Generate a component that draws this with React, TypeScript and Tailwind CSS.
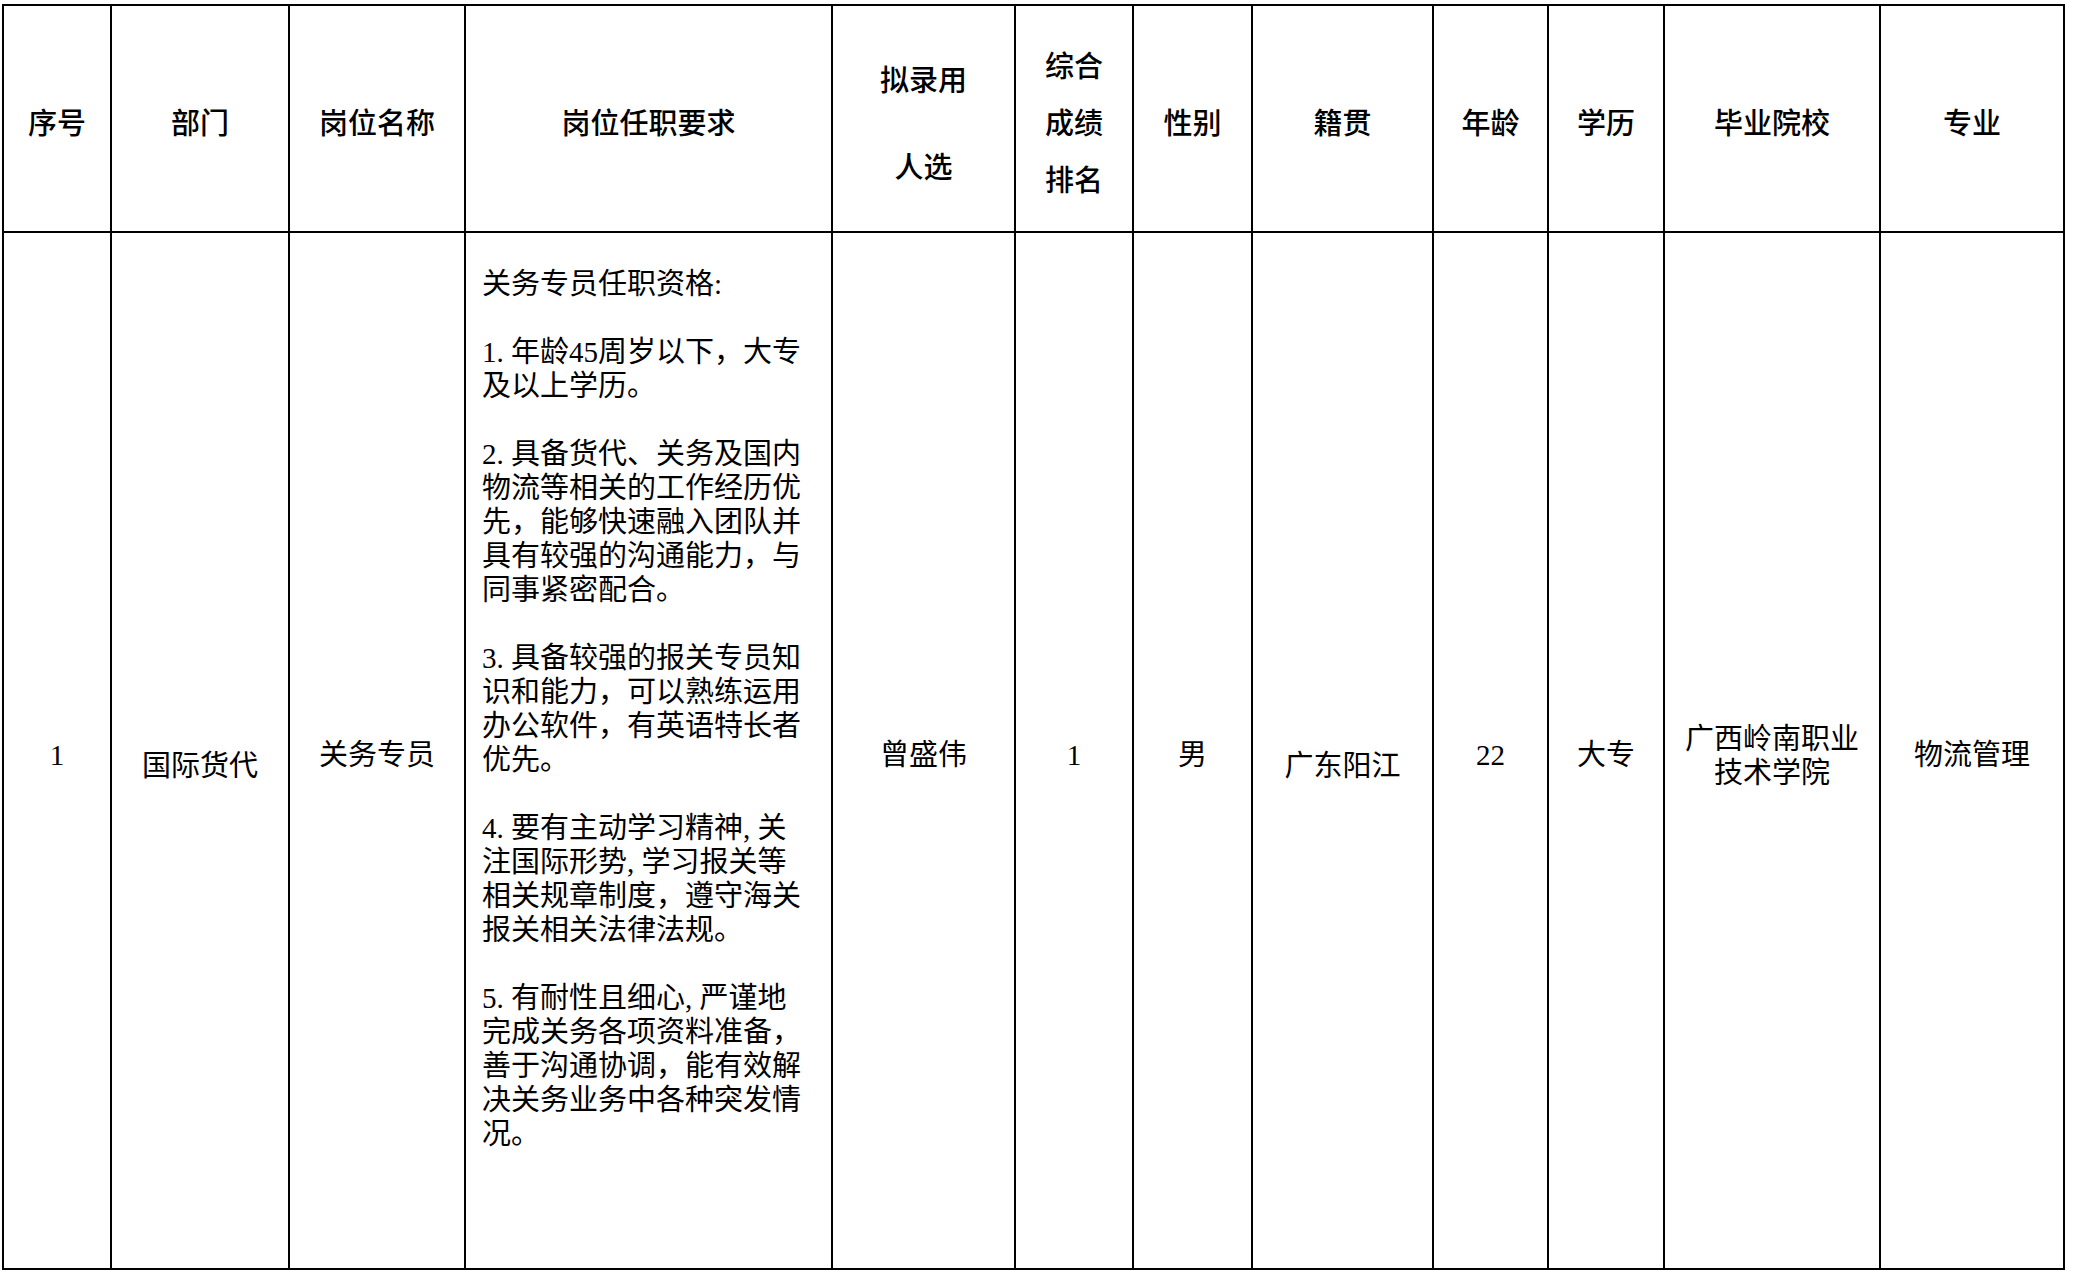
import React from 'react';

const reqLines: string[] = [
  '关务专员任职资格:',
  '',
  '1. 年龄45周岁以下，大专',
  '及以上学历。',
  '',
  '2. 具备货代、关务及国内',
  '物流等相关的工作经历优',
  '先，能够快速融入团队并',
  '具有较强的沟通能力，与',
  '同事紧密配合。',
  '',
  '3. 具备较强的报关专员知',
  '识和能力，可以熟练运用',
  '办公软件，有英语特长者',
  '优先。',
  '',
  '4. 要有主动学习精神, 关',
  '注国际形势, 学习报关等',
  '相关规章制度，遵守海关',
  '报关相关法律法规。',
  '',
  '5. 有耐性且细心, 严谨地',
  '完成关务各项资料准备，',
  '善于沟通协调，能有效解',
  '决关务业务中各种突发情',
  '况。',
];

const th = 'border-2 border-black text-center align-middle pt-[12px] font-medium';
const td = 'border-2 border-black text-center align-middle pt-[11px]';
const tdLow = 'border-2 border-black text-center align-middle pt-[33px]';

export default function App() {
  return (
    <div className="min-h-screen bg-white text-black font-['Liberation_Serif','Noto_Sans_CJK_SC',serif] text-[29px]">
      <table className="table-fixed border-collapse ml-[2px] mt-[4px] w-[2063px]">
        <colgroup>
          <col className="w-[108px]" />
          <col className="w-[178px]" />
          <col className="w-[176px]" />
          <col className="w-[367px]" />
          <col className="w-[183px]" />
          <col className="w-[118px]" />
          <col className="w-[119px]" />
          <col className="w-[181px]" />
          <col className="w-[115px]" />
          <col className="w-[116px]" />
          <col className="w-[216px]" />
          <col className="w-[184px]" />
        </colgroup>
        <thead>
          <tr className="h-[227px]">
            <th className={th}>序号</th>
            <th className={th}>部门</th>
            <th className={th}>岗位名称</th>
            <th className={th}>岗位任职要求</th>
            <th className={th}>
              <div className="leading-[87px]">拟录用</div>
              <div className="leading-[87px]">人选</div>
            </th>
            <th className={th}>
              <div className="leading-[57px]">综合</div>
              <div className="leading-[57px]">成绩</div>
              <div className="leading-[57px]">排名</div>
            </th>
            <th className={th}>性别</th>
            <th className={th}>籍贯</th>
            <th className={th}>年龄</th>
            <th className={th}>学历</th>
            <th className={th}>毕业院校</th>
            <th className={th}>专业</th>
          </tr>
        </thead>
        <tbody>
          <tr className="h-[1037px]">
            <td className={td}>1</td>
            <td className={tdLow}>国际货代</td>
            <td className={td}>关务专员</td>
            <td className="border-2 border-black align-top text-left pt-[34px] pl-[16px] pr-[10px]">
              {reqLines.map((line, i) =>
                line ? (
                  <div key={i} className="leading-[34px] whitespace-pre">
                    {line}
                  </div>
                ) : (
                  <div key={i} className="h-[34px]" />
                )
              )}
            </td>
            <td className={td}>曾盛伟</td>
            <td className={td}>1</td>
            <td className={td}>男</td>
            <td className={tdLow}>广东阳江</td>
            <td className={td}>22</td>
            <td className={td}>大专</td>
            <td className={td}>
              <div className="leading-[34px]">广西岭南职业</div>
              <div className="leading-[34px]">技术学院</div>
            </td>
            <td className={td}>物流管理</td>
          </tr>
        </tbody>
      </table>
    </div>
  );
}
